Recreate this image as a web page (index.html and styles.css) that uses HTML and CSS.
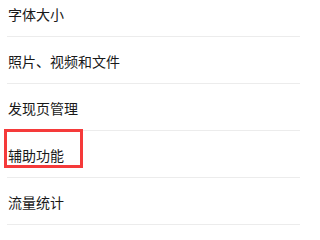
FILE: index.html
```html
<!DOCTYPE html>
<html lang="zh-CN">
<head>
<meta charset="utf-8">
<link rel="stylesheet" href="styles.css">
</head>
<body>
<ul class="list">
  <li class="row"><span class="label">字体大小</span></li>
  <li class="row"><span class="label">照片、视频和文件</span></li>
  <li class="row"><span class="label">发现页管理</span></li>
  <li class="row row-marked"><span class="label">辅助功能</span><span class="mark"></span></li>
  <li class="row"><span class="label">流量统计</span></li>
</ul>
</body>
</html>
```
FILE: styles.css
```css
html, body {
  margin: 0;
  padding: 0;
  background: #ffffff;
}
body {
  width: 300px;
  height: 225px;
  overflow: hidden;
  font-family: "Noto Sans CJK SC", "Noto Sans", sans-serif;
  color: #191919;
}
.list {
  list-style: none;
  margin: -10px 0 0 0;
  padding: 0;
}
.row {
  position: relative;
  display: flex;
  align-items: center;
  height: 46px;
  margin-left: 7px;
  padding-left: 1px;
  border-bottom: 1px solid #ececec;
  font-size: 14px;
}
.label {
  line-height: 20px;
  padding-top: 2px;
}
.mark {
  position: absolute;
  left: -3px;
  top: -2px;
  width: 79px;
  height: 39px;
  box-sizing: border-box;
  border: 3px solid #f53a3a;
}
```
